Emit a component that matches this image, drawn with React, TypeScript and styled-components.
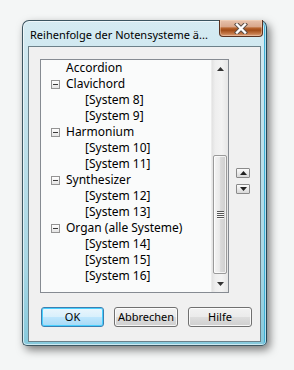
import React from 'react';
import styled, { createGlobalStyle } from 'styled-components';

const GlobalStyle = createGlobalStyle`
	html, body {
		margin: 0;
		padding: 0;
		background: #f4f6f6;
	}
	body {
		font-family: 'Noto Sans', 'Open Sans', sans-serif;
		font-size: 12px;
		color: #000;
	}
`;

const Page = styled.div`
	width: 294px;
	height: 370px;
	padding: 20px 0 0 22px;
	box-sizing: border-box;
`;

const Window = styled.div`
	width: 245px;
	height: 326px;
	box-sizing: border-box;
	display: flex;
	flex-direction: column;
	border: 1px solid #3c5560;
	border-right-color: #24495a;
	border-radius: 7px 7px 5px 5px;
	background: linear-gradient(180deg, #d6ebf2 0%, #c2e2eb 30%, #a9d7e4 75%, #86c9dc 100%);
	box-shadow: 3px 4px 9px rgba(0, 0, 0, 0.5), inset 0 0 0 1px rgba(255, 255, 255, 0.6),
		inset -2px 0 0 #3fb0d6;
`;

const TitleBar = styled.div`
	height: 25px;
	display: flex;
	align-items: flex-start;
	justify-content: space-between;
	padding-left: 7px;
`;

const Title = styled.span`
	padding-top: 6px;
	font-size: 11px;
	line-height: 15px;
	white-space: nowrap;
	color: #000;
`;

const CloseButton = styled.div`
	width: 44px;
	height: 17px;
	margin-top: -1px;
	margin-right: 3px;
	box-sizing: border-box;
	display: flex;
	align-items: center;
	justify-content: center;
	border: 1px solid #5a3220;
	border-top: none;
	border-radius: 0 0 4px 4px;
	background: linear-gradient(
		180deg,
		#e8c3ad 0%,
		#d9a78b 42%,
		#b8652f 50%,
		#a24c18 64%,
		#c27645 84%,
		#d9a07e 100%
	);
	box-shadow: inset 0 0 0 1px rgba(255, 225, 200, 0.4);
`;

const Body = styled.div`
	flex: 1;
	padding: 0 5px 3px 5px;
	display: flex;
`;

const Client = styled.div`
	flex: 1;
	border: 1px solid #6c8089;
	background: #f0f0f0;
	display: flex;
	flex-direction: column;
	padding: 12px 0 0 11px;
`;

const Middle = styled.div`
	display: flex;
	gap: 7px;
`;

const ListBox = styled.div`
	width: 189px;
	height: 234px;
	box-sizing: border-box;
	border: 1px solid #868b92;
	background: #fafbfb;
	display: flex;
	overflow: hidden;
`;

const Tree = styled.div`
	flex: 1;
	display: flex;
	flex-direction: column;
`;

const Row = styled.div<{ $indent: number }>`
	height: 16px;
	display: flex;
	align-items: center;
	padding-left: ${({ $indent }) => $indent}px;
	white-space: nowrap;
	line-height: 16px;
`;

const Expander = styled.span`
	width: 9px;
	height: 9px;
	box-sizing: border-box;
	margin-right: 6px;
	border: 1px solid #949494;
	background: linear-gradient(180deg, #ffffff 0%, #e4e4e4 100%);
	display: flex;
	align-items: center;
	justify-content: center;

	&::after {
		content: '';
		width: 5px;
		height: 1px;
		background: #3a3a3a;
	}
`;

const ScrollBar = styled.div`
	width: 17px;
	display: flex;
	flex-direction: column;
	background: linear-gradient(90deg, #e2e2e2 0%, #eeeeee 20%, #f3f3f3 60%, #e6e6e6 100%);
	border-left: 1px solid #ececec;
	box-sizing: border-box;
`;

const ScrollArrow = styled.div`
	height: 17px;
	display: flex;
	align-items: center;
	justify-content: center;
`;

const Track = styled.div`
	flex: 1;
	display: flex;
	flex-direction: column;
	justify-content: flex-end;
	padding-bottom: 1px;
`;

const Thumb = styled.div`
	height: 119px;
	margin: 0 1px;
	box-sizing: border-box;
	border: 1px solid #9a9a9a;
	border-radius: 2px;
	background: linear-gradient(90deg, #f4f4f4 0%, #eaeaea 45%, #d9d9d9 55%, #cfcfcf 100%);
	box-shadow: inset 0 0 0 1px rgba(255, 255, 255, 0.7);
	display: flex;
	align-items: center;
	justify-content: center;
`;

const Grip = styled.div`
	width: 7px;
	display: flex;
	flex-direction: column;
	gap: 1px;

	span {
		height: 1px;
		background: #555;
		box-shadow: 0 1px 0 #f8f8f8;
	}
`;

const SideButtons = styled.div`
	display: flex;
	flex-direction: column;
	gap: 6px;
	margin-top: 109px;
`;

const MoveButton = styled.div`
	width: 14px;
	height: 10px;
	box-sizing: border-box;
	border: 1px solid #8a8a8a;
	border-radius: 1px;
	background: linear-gradient(180deg, #fbfbfb 0%, #ebebeb 50%, #d8d8d8 100%);
	display: flex;
	align-items: center;
	justify-content: center;
`;

const ButtonRow = styled.div`
	display: flex;
	gap: 10px;
	margin-top: 14px;
	padding-left: 1px;
`;

const Button = styled.div<{ $default?: boolean }>`
	width: ${({ $default }) => ($default ? '63px' : '64px')};
	height: 20px;
	box-sizing: border-box;
	border: 1px solid ${({ $default }) => ($default ? '#3c7fb1' : '#707070')};
	border-radius: 3px;
	background: ${({ $default }) =>
		$default
			? 'linear-gradient(180deg, #eaf6fd 0%, #d9f0fc 48%, #bee6fd 52%, #a7d9f5 100%)'
			: 'linear-gradient(180deg, #f2f2f2 0%, #ebebeb 48%, #dddddd 52%, #cfcfcf 100%)'};
	box-shadow: inset 0 0 0 1px ${({ $default }) => ($default ? '#48d0ff' : 'rgba(255,255,255,0.8)')};
	display: flex;
	align-items: center;
	justify-content: center;
	font-size: 11px;
	line-height: 16px;
`;

const Triangle = ({ up, color = '#222' }: { up?: boolean; color?: string }) => (
	<svg width='7' height='4' viewBox='0 0 7 4'>
		<path d={up ? 'M3.5 0 L7 4 L0 4 Z' : 'M0 0 L7 0 L3.5 4 Z'} fill={color} />
	</svg>
);

const CloseX = () => (
	<svg width='14' height='11' viewBox='0 0 14 11'>
		<path d='M3 1.5 L11 9.5 M11 1.5 L3 9.5' stroke='#5e5048' strokeWidth='4.4' strokeLinecap='square' />
		<path d='M3 1.5 L11 9.5 M11 1.5 L3 9.5' stroke='#ffffff' strokeWidth='2.4' strokeLinecap='square' />
	</svg>
);

type Item = { label: string; kind: 'leaf' | 'group' | 'child' };

const items: Item[] = [
	{ label: 'Accordion', kind: 'leaf' },
	{ label: 'Clavichord', kind: 'group' },
	{ label: '[System 8]', kind: 'child' },
	{ label: '[System 9]', kind: 'child' },
	{ label: 'Harmonium', kind: 'group' },
	{ label: '[System 10]', kind: 'child' },
	{ label: '[System 11]', kind: 'child' },
	{ label: 'Synthesizer', kind: 'group' },
	{ label: '[System 12]', kind: 'child' },
	{ label: '[System 13]', kind: 'child' },
	{ label: 'Organ (alle Systeme)', kind: 'group' },
	{ label: '[System 14]', kind: 'child' },
	{ label: '[System 15]', kind: 'child' },
	{ label: '[System 16]', kind: 'child' },
];

const indentFor = (kind: Item['kind']) => (kind === 'leaf' ? 25 : kind === 'group' ? 10 : 44);

export default function App() {
	return (
		<>
			<GlobalStyle />
			<Page>
				<Window>
					<TitleBar>
						<Title>Reihenfolge der Notensysteme ä...</Title>
						<CloseButton>
							<CloseX />
						</CloseButton>
					</TitleBar>
					<Body>
						<Client>
							<Middle>
								<ListBox>
									<Tree>
										{items.map((it) => (
											<Row key={it.label} $indent={indentFor(it.kind)}>
												{it.kind === 'group' && <Expander />}
												{it.label}
											</Row>
										))}
									</Tree>
									<ScrollBar>
										<ScrollArrow>
											<Triangle up color='#333' />
										</ScrollArrow>
										<Track>
											<Thumb>
												<Grip>
													<span />
													<span />
													<span />
													<span />
												</Grip>
											</Thumb>
										</Track>
										<ScrollArrow>
											<Triangle color='#333' />
										</ScrollArrow>
									</ScrollBar>
								</ListBox>
								<SideButtons>
									<MoveButton>
										<Triangle up />
									</MoveButton>
									<MoveButton>
										<Triangle />
									</MoveButton>
								</SideButtons>
							</Middle>
							<ButtonRow>
								<Button $default>OK</Button>
								<Button>Abbrechen</Button>
								<Button>Hilfe</Button>
							</ButtonRow>
						</Client>
					</Body>
				</Window>
			</Page>
		</>
	);
}
